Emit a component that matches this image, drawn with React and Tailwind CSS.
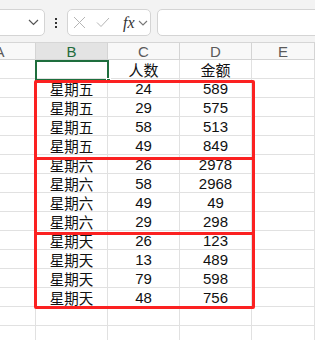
import React from "react";

const rows = [
  ["星期五", "24", "589"],
  ["星期五", "29", "575"],
  ["星期五", "58", "513"],
  ["星期五", "49", "849"],
  ["星期六", "26", "2978"],
  ["星期六", "58", "2968"],
  ["星期六", "49", "49"],
  ["星期六", "29", "298"],
  ["星期天", "26", "123"],
  ["星期天", "13", "489"],
  ["星期天", "79", "598"],
  ["星期天", "48", "756"],
];

const num = { fontFamily: '"Liberation Sans", Arial, sans-serif' };
const cjk = { fontFamily: '"Noto Sans CJK SC", "Liberation Sans", sans-serif' };

function Cell({ children, font, size = "text-[15px]" }) {
  return (
    <div
      className={`h-[19px] border-r border-b border-[#e1e1e1] flex items-end justify-center leading-none pb-[1px] text-[#111] ${size}`}
      style={font}
    >
      {children}
    </div>
  );
}

function Row({ b, c, d, font }) {
  return (
    <div className="grid grid-cols-[72px_72px_72px_72px_1fr]">
      <Cell />
      <Cell font={cjk} size="text-[14.5px]">{b}</Cell>
      <Cell font={font || num}>{c}</Cell>
      <Cell font={font || num}>{d}</Cell>
      <Cell />
    </div>
  );
}

export default function App() {
  return (
    <div className="w-[315px] h-[340px] overflow-hidden bg-white relative">
      {/* toolbar */}
      <div className="h-[43px] bg-[#f3f3f3] flex items-start pt-[9px] border-b border-[#d6d6d6]">
        <div className="-ml-[12px] w-[57px] h-[27px] bg-white border border-[#d4d4d4] rounded-[5px] flex items-center justify-end pr-[5px]">
          <svg width="11" height="7" viewBox="0 0 11 7" fill="none">
            <path d="M1 1l4.5 4.5L10 1" stroke="#555" strokeWidth="1.2" />
          </svg>
        </div>
        <div className="w-[22px] h-[27px] flex flex-col items-center justify-center gap-[2px]">
          <span className="w-[2px] h-[2px] bg-[#333]" />
          <span className="w-[2px] h-[2px] bg-[#333]" />
          <span className="w-[2px] h-[2px] bg-[#333]" />
        </div>
        <div className="w-[84px] h-[27px] bg-white border border-[#d4d4d4] rounded-[5px] flex items-center pl-[5px]">
          <svg width="13" height="13" viewBox="0 0 13 13" fill="none" className="mr-[10px]">
            <path d="M1 1l11 11M12 1L1 12" stroke="#b5b5b5" strokeWidth="1" />
          </svg>
          <svg width="14" height="11" viewBox="0 0 14 11" fill="none" className="mr-[13px]">
            <path d="M1 5.5l4 4L13 1" stroke="#b5b5b5" strokeWidth="1" />
          </svg>
          <span className="italic text-[16px] leading-none text-[#333] mr-[3px]" style={{ fontFamily: '"Liberation Serif", "Times New Roman", serif' }}>
            fx
          </span>
          <svg width="10" height="6" viewBox="0 0 10 6" fill="none">
            <path d="M1 1l4 4 4-4" stroke="#777" strokeWidth="1.1" />
          </svg>
        </div>
        <div className="ml-[6px] flex-1 h-[27px] bg-white border border-[#d4d4d4] rounded-[5px] -mr-[10px]" />
      </div>

      {/* grid */}
      <div className="-ml-[36px]">
        <div className="grid grid-cols-[72px_72px_72px_72px_1fr] h-[17px]">
          {["A", "B", "C", "D", "E"].map((l) => (
            <div
              key={l}
              className={`border-r border-b border-[#d4d4d4] flex items-center justify-center text-[15px] leading-none ${
                l === "B" ? "bg-[#e3e3e3] text-[#1f6b3c]" : "bg-[#f8f8f8] text-[#5a5a5a]"
              }`}
              style={num}
            >
              {l}
            </div>
          ))}
        </div>
        <Row b="" c="人数" d="金额" font={cjk} />
        {rows.map((r, i) => (
          <Row key={i} b={r[0]} c={r[1]} d={r[2]} />
        ))}
        <Row b="" c="" d="" />
        <Row b="" c="" d="" />
      </div>

      {/* selection */}
      <div className="absolute left-[35px] top-[60px] w-[74px] h-[21px] border-2 border-[#1e6e3d]" />
      <div className="absolute left-[106px] top-[78px] w-[5px] h-[5px] bg-[#1e6e3d] border border-white" />

      {/* red annotations */}
      <div className="absolute left-[34px] top-[80px] w-[221px] h-[80px] border-[3px] border-[#fb2121] rounded-[2px]" />
      <div className="absolute left-[34px] top-[157px] w-[221px] h-[78px] border-[3px] border-[#fb2121] rounded-[2px]" />
      <div className="absolute left-[34px] top-[232px] w-[221px] h-[77px] border-[3px] border-[#fb2121] rounded-[2px]" />
    </div>
  );
}
